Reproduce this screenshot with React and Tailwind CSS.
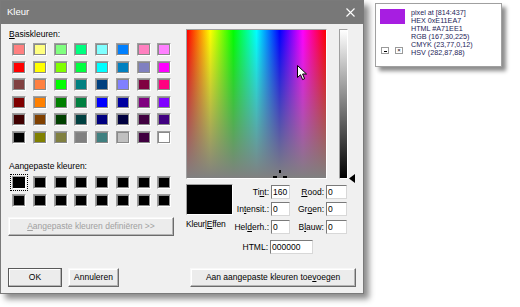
import React from "react";

const basic = [
  ["#ff8080", "#ffff80", "#80ff80", "#00ff80", "#80ffff", "#0080ff", "#ff80c0", "#ff80ff"],
  ["#ff0000", "#ffff00", "#80ff00", "#00ff40", "#00ffff", "#0080c0", "#8080c0", "#ff00ff"],
  ["#804040", "#ff8040", "#00ff00", "#008080", "#004080", "#8080ff", "#800040", "#ff0080"],
  ["#800000", "#ff8000", "#008000", "#008040", "#0000ff", "#0000a0", "#800080", "#8000ff"],
  ["#400000", "#804000", "#004000", "#004040", "#000080", "#000040", "#400040", "#400080"],
  ["#000000", "#808000", "#808040", "#808080", "#408080", "#c0c0c0", "#400040", "#ffffff"],
];

function Swatch({ color, selected }) {
  return (
    <div className="relative w-[14px] h-[13px] border border-t-[#a0a0a0] border-l-[#a0a0a0] border-r-white border-b-white">
      <div
        className={`w-full h-full border ${selected ? "border-2 border-[#000]" : "border-[#8a8a8a]"}`}
        style={{ background: color }}
      />
      {selected && (
        <div className="absolute -left-[3px] -top-[3px] -right-[3px] -bottom-[3px] border border-dotted border-black" />
      )}
    </div>
  );
}

function Input({ value, w }) {
  return (
    <div
      className={`${w} h-[14px] bg-white border border-t-[#7a7a7a] border-l-[#7a7a7a] border-r-[#d8d8d8] border-b-[#d8d8d8] pl-[1px] leading-[12px]`}
    >
      {value}
    </div>
  );
}

function Btn({ children, w, def, disabled }) {
  return (
    <div
      className={`${w} h-[19px] flex items-center justify-center bg-[#ececec] border ${
        def ? "border-[#5a5a5a]" : "border-t-[#f8f8f8] border-l-[#f8f8f8] border-r-[#6b6b6b] border-b-[#6b6b6b]"
      } shadow-[inset_-1px_-1px_0_#b4b4b4,inset_1px_1px_0_#ffffff] ${disabled ? "text-[#a0a0a0]" : "text-black"}`}
    >
      {children}
    </div>
  );
}

export default function App() {
  return (
    <div className="w-[520px] h-[307px] bg-white flex items-start overflow-hidden text-[8.5px] text-black font-['Liberation_Sans',Arial,sans-serif]">
      {/* dialog */}
      <div className="w-[364px] flex flex-col border border-[#7a7a7a] shadow-[5px_5px_6px_rgba(0,0,0,0.45)]">
        <div className="h-[23px] bg-[#787878] flex items-center justify-between pl-[6px] pr-[8px] text-white text-[9.5px]">
          <span>Kleur</span>
          <svg width="9" height="9" viewBox="0 0 9 9">
            <path d="M0.5 0.5 L8.5 8.5 M8.5 0.5 L0.5 8.5" stroke="#ffffff" strokeWidth="1.1" />
          </svg>
        </div>

        <div className="bg-[#f0f0f0] flex flex-col pt-[5px] pb-[6px]">
          <div className="flex">
            {/* left column */}
            <div className="w-[185px] pl-[7px] flex flex-col">
              <div className="ml-[1px] h-[10px] leading-[10px]">
                <u className="underline-offset-1">B</u>asiskleuren:
              </div>
              <div className="ml-[4px] mt-[4px] grid grid-cols-[repeat(8,14px)] gap-x-[6.75px] gap-y-[4.6px]">
                {basic.flat().map((c, i) => (
                  <Swatch key={i} color={c} />
                ))}
              </div>
              <div className="ml-[1px] mt-[17px] h-[10px] leading-[10px]">Aangepaste kleuren:</div>
              <div className="ml-[4px] mt-[5px] grid grid-cols-[repeat(8,14px)] gap-x-[6.75px] gap-y-[5px]">
                {Array.from({ length: 16 }).map((_, i) => (
                  <Swatch key={i} color="#000000" selected={i === 0} />
                ))}
              </div>
              <div className="mt-[10px]">
                <Btn w="w-[166px]" disabled>
                  <span>
                    <u className="underline-offset-1">A</u>angepaste kleuren definiëren &gt;&gt;
                  </span>
                </Btn>
              </div>
            </div>

            {/* right column */}
            <div className="flex flex-col">
              <div className="flex">
                <div className="relative w-[141px] h-[150px] overflow-hidden border border-t-[#a0a0a0] border-l-[#a0a0a0] border-r-white border-b-white bg-[linear-gradient(to_right,#ff0000,#ffff00,#00ff00,#00ffff,#0000ff,#ff00ff,#ff0000)]">
                  <div className="absolute inset-0 bg-[linear-gradient(to_bottom,rgba(128,128,128,0),#808080)]" />
                  <svg className="absolute left-[110px] top-[35px]" width="11" height="16" viewBox="0 0 11 16">
                    <path d="M0.5 0.5 L0.5 12.5 L3.5 9.7 L5.6 14.6 L7.6 13.7 L5.6 9 L9.5 9 Z" fill="#ffffff" stroke="#000000" strokeWidth="1" />
                  </svg>
                  <svg className="absolute left-[86px] top-[140px]" width="15" height="12" viewBox="0 0 15 12">
                    <rect x="6" y="0" width="2" height="3" fill="#000" />
                    <rect x="0" y="6" width="4" height="2" fill="#000" />
                    <rect x="10" y="6" width="4" height="2" fill="#000" />
                  </svg>
                </div>
                <div className="ml-[12px] w-[9px] h-[150px] border border-t-[#a0a0a0] border-l-[#a0a0a0] border-r-white border-b-white bg-[linear-gradient(to_bottom,#ffffff,#000000)]" />
                <svg className="self-end -mb-[4px] ml-[1px]" width="6" height="9" viewBox="0 0 6 9">
                  <path d="M6 0 L0 4.5 L6 9 Z" fill="#000" />
                </svg>
              </div>

              <div className="mt-[5px] flex">
                <div className="w-[47px] flex flex-col">
                  <div className="h-[31px] bg-black border border-t-[#a0a0a0] border-l-[#a0a0a0] border-r-white border-b-white" />
                  <div className="mt-[4px] leading-[10px] tracking-[-0.2px]">
                    Kleur|<u className="underline-offset-1">E</u>ffen
                  </div>
                </div>
                <div className="flex flex-col">
                  <div className="mt-[1px] flex items-center h-[14px]">
                    <span className="w-[38px] pr-[2px] text-right">
                      Ti<u className="underline-offset-1">n</u>t:
                    </span>
                    <Input w="w-[19px]" value="160" />
                    <span className="w-[36px] pr-[2px] text-right">
                      <u className="underline-offset-1">R</u>ood:
                    </span>
                    <Input w="w-[21px]" value="0" />
                  </div>
                  <div className="mt-[3px] flex items-center h-[14px]">
                    <span className="w-[38px] pr-[2px] text-right">
                      In<u className="underline-offset-1">t</u>ensit.:
                    </span>
                    <Input w="w-[19px]" value="0" />
                    <span className="w-[36px] pr-[2px] text-right">
                      Gr<u className="underline-offset-1">o</u>en:
                    </span>
                    <Input w="w-[21px]" value="0" />
                  </div>
                  <div className="mt-[4px] flex items-center h-[14px]">
                    <span className="w-[38px] pr-[2px] text-right">
                      Hel<u className="underline-offset-1">d</u>erh.:
                    </span>
                    <Input w="w-[19px]" value="0" />
                    <span className="w-[36px] pr-[2px] text-right">
                      B<u className="underline-offset-1">l</u>auw:
                    </span>
                    <Input w="w-[21px]" value="0" />
                  </div>
                  <div className="mt-[6px] flex items-center h-[14px]">
                    <span className="w-[37px] pr-[2px] text-right">HTML:</span>
                    <Input w="w-[43px]" value="000000" />
                  </div>
                </div>
              </div>
            </div>
          </div>

          {/* buttons */}
          <div className="mt-[14px] flex pl-[7px] pr-[7px]">
            <Btn w="w-[54px]" def>
              OK
            </Btn>
            <div className="ml-[6px]">
              <Btn w="w-[51px]">Annuleren</Btn>
            </div>
            <div className="ml-auto">
              <Btn w="w-[166px]">
                <span>
                  Aan aangepaste kleuren toe<u className="underline-offset-1">v</u>oegen
                </span>
              </Btn>
            </div>
          </div>
        </div>
      </div>

      {/* pixel info popup */}
      <div className="ml-[11px] mt-[3px] w-[127px] h-[64px] bg-white border border-[#a0a0a0] shadow-[4px_4px_4px_rgba(0,0,0,0.45)] flex">
        <div className="w-[35px] pl-[4px] pt-[5px] flex flex-col">
          <div className="w-[25px] h-[15px] bg-[#a71ee1]" />
          <div className="mt-[23px] ml-[1px] flex gap-[6px]">
            <div className="w-[8px] h-[7px] border border-[#9a9a9a] flex items-center justify-center">
              <div className="w-[3px] h-[1px] bg-black mt-[2px]" />
            </div>
            <div className="w-[8px] h-[7px] border border-[#9a9a9a] flex items-center justify-center text-[6px] leading-[5px]">
              ×
            </div>
          </div>
        </div>
        <div className="pt-[5px] text-[7.2px] leading-[8px] text-[#1c1c58] whitespace-nowrap">
          <div>pixel at [814:437]</div>
          <div>HEX 0xE11EA7</div>
          <div>HTML #A71EE1</div>
          <div>RGB (167,30,225)</div>
          <div>CMYK (23,77,0,12)</div>
          <div>HSV (282,87,88)</div>
        </div>
      </div>
    </div>
  );
}
